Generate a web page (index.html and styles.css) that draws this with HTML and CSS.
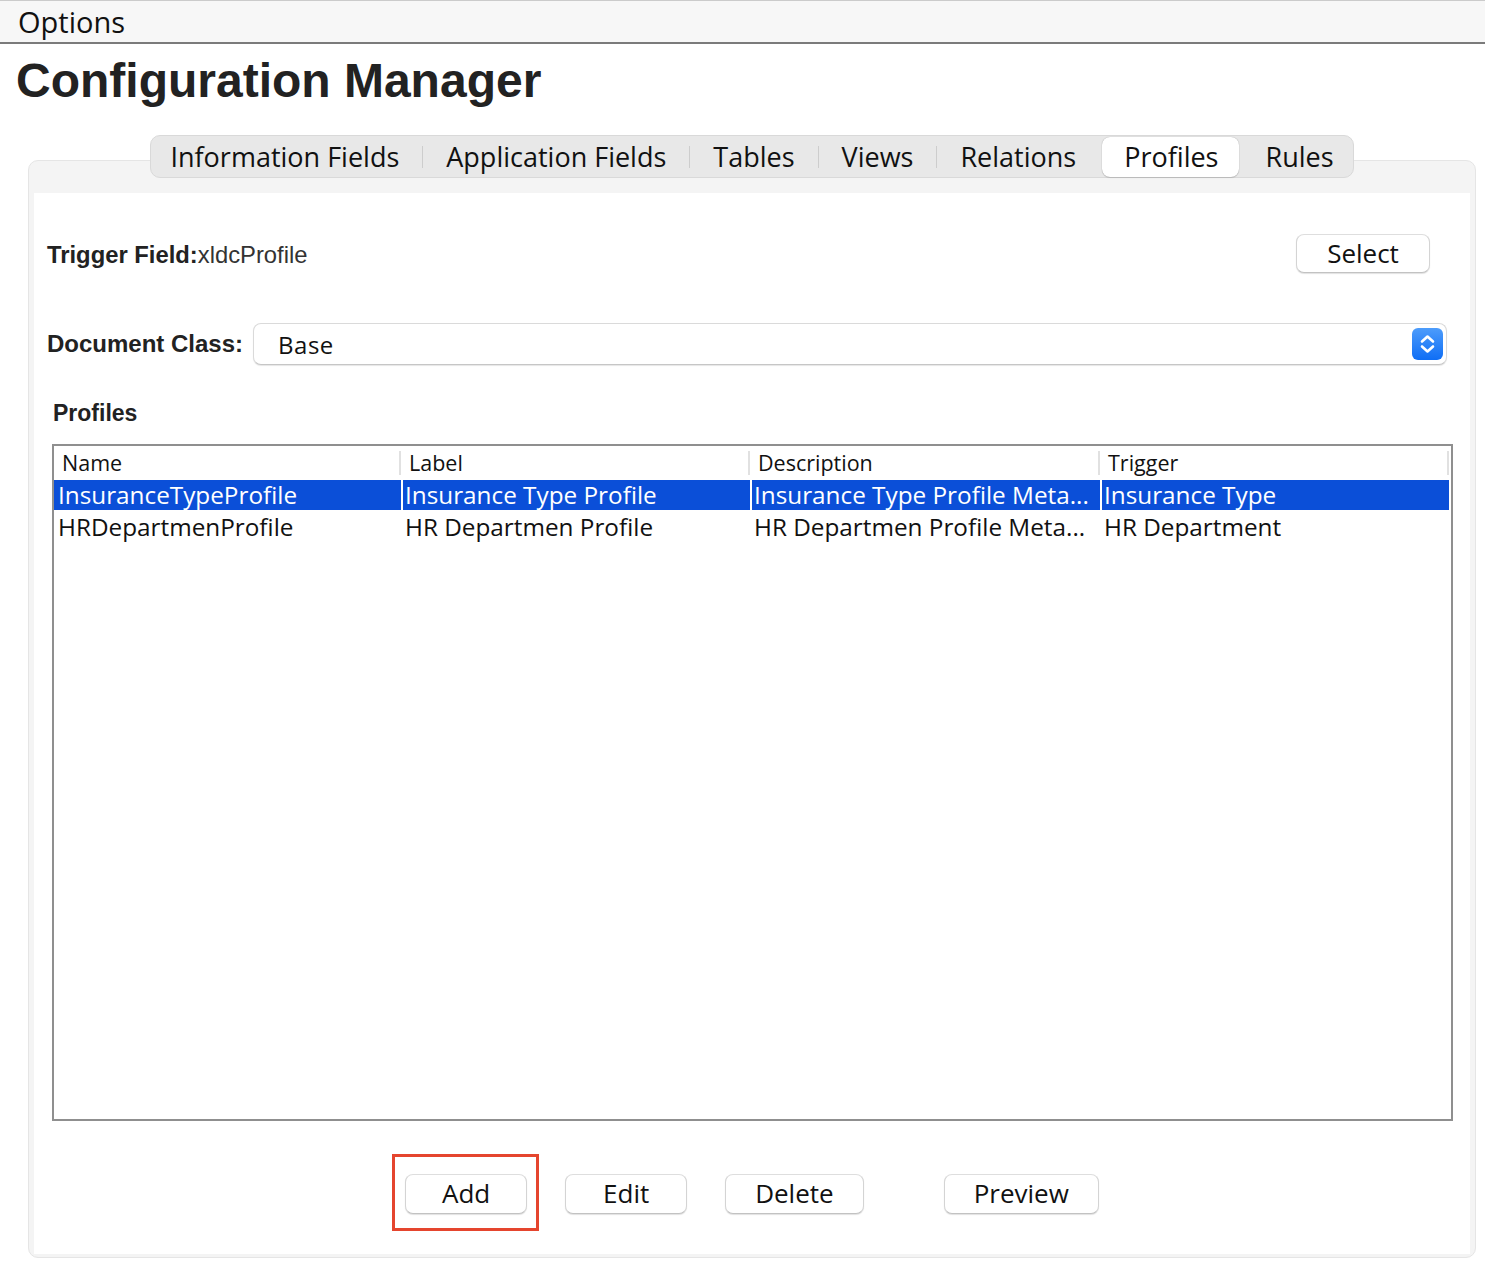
FILE: index.html
```html
<!DOCTYPE html>
<html>
<head>
<meta charset="utf-8">
<title>Configuration Manager</title>
<link rel="stylesheet" href="styles.css">
</head>
<body>
<div class="menubar"><span class="menu-item">Options</span></div>
<h1 class="title">Configuration Manager</h1>
<div class="tabbed">
  <div class="tabs-wrap">
    <div class="tabs">
      <div class="tab first">Information Fields</div>
      <div class="sep"></div>
      <div class="tab">Application Fields</div>
      <div class="sep"></div>
      <div class="tab">Tables</div>
      <div class="sep"></div>
      <div class="tab">Views</div>
      <div class="sep"></div>
      <div class="tab">Relations</div>
      <div class="sep hidden"></div>
      <div class="tab active">Profiles</div>
      <div class="sep hidden"></div>
      <div class="tab last">Rules</div>
    </div>
  </div>
  <div class="panel">
    <div class="content">
      <div class="trigger-row">
        <div class="trigger-label"><span class="bold">Trigger Field:</span><span class="value">xldcProfile</span></div>
        <button class="btn btn-select">Select</button>
      </div>
      <div class="class-row">
        <span class="field-label">Document Class:</span>
        <div class="combo">
          <span class="combo-text">Base</span>
          <span class="stepper">
            <svg width="31" height="32" viewBox="0 0 31 32">
              <defs>
                <linearGradient id="sg" x1="0" y1="0" x2="0" y2="1">
                  <stop offset="0" stop-color="#4d9cfb"/>
                  <stop offset="1" stop-color="#0f6ef5"/>
                </linearGradient>
              </defs>
              <rect x="0" y="0" width="31" height="32" rx="6" fill="url(#sg)"/>
              <path d="M10 13.5 L15.5 8.5 L21 13.5" fill="none" stroke="#fff" stroke-width="2.6" stroke-linecap="round" stroke-linejoin="round"/>
              <path d="M10 18.5 L15.5 23.5 L21 18.5" fill="none" stroke="#fff" stroke-width="2.6" stroke-linecap="round" stroke-linejoin="round"/>
            </svg>
          </span>
        </div>
      </div>
      <div class="section-title">Profiles</div>
      <div class="table">
        <div class="grid header">
          <div class="hcell">Name</div>
          <div class="hcell">Label</div>
          <div class="hcell">Description</div>
          <div class="hcell">Trigger</div>
        </div>
        <div class="grid row selected">
          <div class="cell">InsuranceTypeProfile</div>
          <div class="cell">Insurance Type Profile</div>
          <div class="cell">Insurance Type Profile Meta...</div>
          <div class="cell">Insurance Type</div>
        </div>
        <div class="grid row">
          <div class="cell">HRDepartmenProfile</div>
          <div class="cell">HR Departmen Profile</div>
          <div class="cell">HR Departmen Profile Meta...</div>
          <div class="cell">HR Department</div>
        </div>
      </div>
      <div class="actions">
        <button class="btn highlighted">Add</button>
        <button class="btn">Edit</button>
        <button class="btn">Delete</button>
        <button class="btn btn-preview">Preview</button>
      </div>
    </div>
  </div>
</div>
</body>
</html>
```

FILE: styles.css
```css
* { box-sizing: border-box; }

html, body {
  margin: 0;
  padding: 0;
  background: #ffffff;
}

body {
  font-family: "Open Sans", "DejaVu Sans", sans-serif;
  color: #111;
  width: 1485px;
  height: 1275px;
  overflow: hidden;
}

.menubar {
  height: 44px;
  background: #f7f7f7;
  border-top: 1px solid #cbcbcb;
  border-bottom: 2px solid #7b7b7b;
  display: flex;
  align-items: center;
  padding-left: 18px;
}

.menu-item {
  font-size: 29px;
  line-height: 36px;
  color: #111;
}

.title {
  margin: 8px 0 0 16px;
  font-family: "Liberation Sans", Arial, sans-serif;
  font-weight: bold;
  font-size: 48px;
  line-height: 58px;
  color: #222;
}

.tabbed {
  margin: 25px 9px 0 28px;
}

.tabs-wrap {
  display: flex;
  justify-content: center;
  position: relative;
  z-index: 1;
  margin-bottom: -18px;
}

.tabs {
  display: flex;
  align-items: center;
  height: 43px;
  padding: 1px 1px 0 1px;
  background: #e8e8e8;
  border: 1px solid #d9d9d9;
  border-radius: 10px;
}

.tab {
  height: 40px;
  padding: 0 23px;
  font-size: 27px;
  line-height: 40px;
  color: #111;
  white-space: nowrap;
}

.tab.first {
  padding-left: 18px;
}

.tab.last {
  padding-right: 18px;
}

.tab.active {
  background: #ffffff;
  border-radius: 8px;
  padding: 0 21px 0 22px;
  box-shadow: 0 0 1px rgba(0, 0, 0, 0.35), 0 1px 1px rgba(0, 0, 0, 0.12);
}

.sep {
  width: 1px;
  height: 22px;
  background: #cdcdcd;
}

.sep.hidden {
  background: transparent;
  width: 3px;
}

.panel {
  background: #f4f4f4;
  border: 1px solid #e5e5e5;
  border-radius: 10px;
  padding: 32px 5px 3px 5px;
}

.content {
  background: #ffffff;
  padding: 41px 0 40px 0;
}

.bold {
  font-weight: bold;
}

.trigger-row {
  display: flex;
  align-items: center;
  justify-content: space-between;
  padding: 0 40px 0 13px;
}

.trigger-label {
  font-family: "Liberation Sans", Arial, sans-serif;
  font-size: 23.8px;
  line-height: 30px;
  padding-top: 2px;
  color: #222;
}

.trigger-label .value {
  color: #333;
}

.btn {
  font-family: "Open Sans", "DejaVu Sans", sans-serif;
  font-size: 26px;
  color: #111;
  height: 40px;
  min-width: 122px;
  padding: 0 29px 2px;
  background: #ffffff;
  border: 1px solid #d4d4d4;
  border-top-color: #dedede;
  border-bottom-color: #c2c2c2;
  border-radius: 8px;
  box-shadow: 0 1px 1px rgba(0, 0, 0, 0.12);
  line-height: 36px;
}

.btn-select {
  height: 39px;
  width: 134px;
}

.class-row {
  display: flex;
  align-items: center;
  gap: 10px;
  margin-top: 50px;
  padding: 0 23px 0 13px;
}

.field-label {
  font-family: "Liberation Sans", Arial, sans-serif;
  font-weight: bold;
  font-size: 24px;
  color: #222;
  white-space: nowrap;
}

.combo {
  flex: 1;
  height: 42px;
  display: flex;
  align-items: center;
  justify-content: space-between;
  background: #ffffff;
  border: 1px solid #dadada;
  border-bottom-color: #c6c6c6;
  border-radius: 8px;
  box-shadow: 0 1px 1px rgba(0, 0, 0, 0.1);
  padding: 0 3px 0 24px;
}

.combo-text {
  font-size: 24px;
  letter-spacing: 0.5px;
  color: #111;
}

.stepper {
  display: flex;
  width: 31px;
  height: 32px;
}

.section-title {
  margin-top: 35px;
  padding-left: 19px;
  font-family: "Liberation Sans", Arial, sans-serif;
  font-weight: bold;
  font-size: 23px;
  line-height: 26px;
  color: #222;
}

.table {
  margin: 18px 17px 0 18px;
  height: 677px;
  border: 2px solid #8f8f8f;
  background: #ffffff;
}

.grid {
  display: grid;
  grid-template-columns: 347px 347px 348px 347px;
  column-gap: 2px;
}

.header {
  height: 34px;
  align-items: center;
}

.hcell {
  font-size: 21.5px;
  line-height: 24px;
  padding-left: 6px;
  border-right: 2px solid #e1e1e1;
  color: #111;
  white-space: nowrap;
}

.hcell:first-child {
  padding-left: 8px;
}

.row {
  height: 30px;
  margin-bottom: 2px;
}

.cell {
  font-size: 24.3px;
  line-height: 30px;
  padding-left: 2px;
  color: #111;
  white-space: nowrap;
}

.cell:first-child {
  padding-left: 4px;
}

.row.selected .cell {
  background: #0b4fd8;
  color: #ffffff;
}

.actions {
  display: flex;
  justify-content: center;
  gap: 38px;
  margin-top: 53px;
}

.btn-preview {
  margin-left: 42px;
}

.highlighted {
  position: relative;
}

.highlighted::after {
  content: "";
  position: absolute;
  top: -21px;
  left: -14px;
  right: -13px;
  bottom: -18px;
  border: 3px solid #e5452e;
}
```
